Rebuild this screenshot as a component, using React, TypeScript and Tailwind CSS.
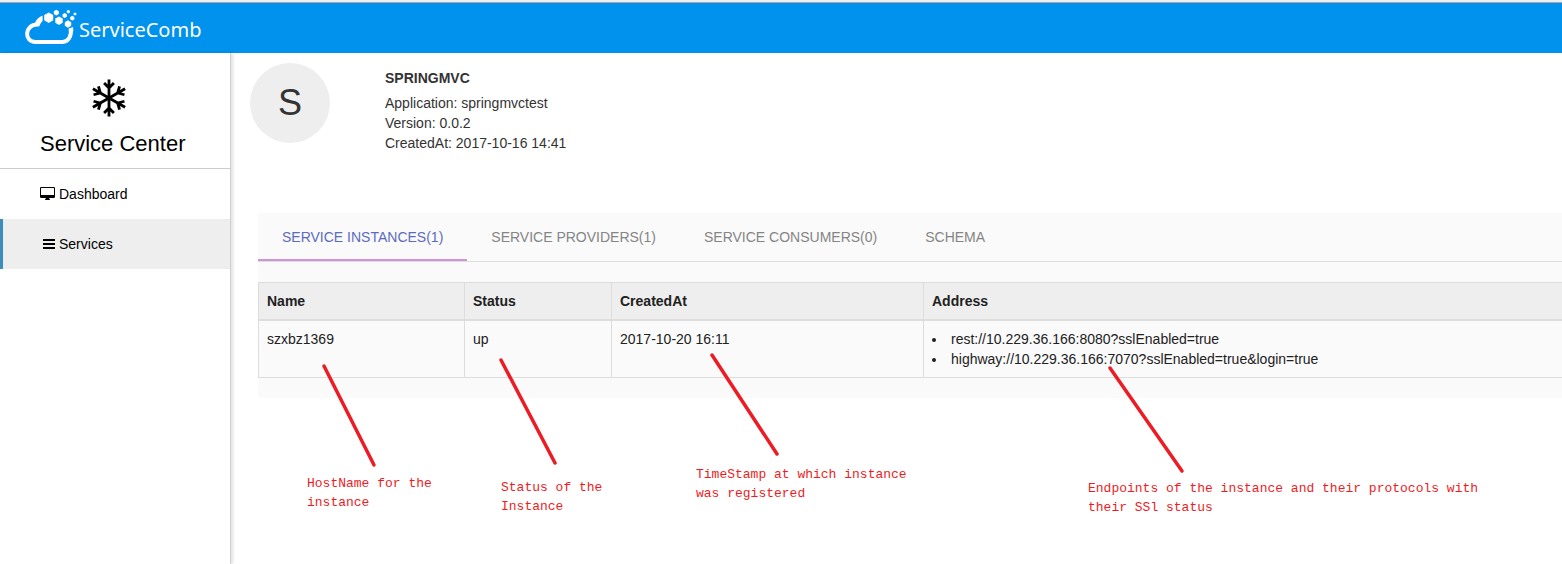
import React from "react";

const hexagons = [
  { x: 48.7, y: 17.7, r: 5.2 },
  { x: 59, y: 20.7, r: 4.3 },
  { x: 68, y: 24, r: 3.7 },
  { x: 56.3, y: 12.6, r: 2.9 },
  { x: 64.7, y: 15.5, r: 2.5 },
  { x: 72.3, y: 18.2, r: 2.4 },
  { x: 68.3, y: 11.7, r: 1.8 },
  { x: 75, y: 14, r: 1.6 },
];

function hexPoints(x: number, y: number, r: number) {
  return [30, 90, 150, 210, 270, 330]
    .map((a) => {
      const t = (a * Math.PI) / 180;
      return `${(x + r * Math.cos(t)).toFixed(2)},${(y + r * Math.sin(t)).toFixed(2)}`;
    })
    .join(" ");
}

function CloudLogo() {
  return (
    <svg viewBox="24 9 54 38" className="h-[38px] w-[54px] shrink-0" aria-hidden="true">
      <path
        d="M71 28.5C71.6 36 68.5 41.9 62.5 41.9H35.5C23.8 41.9 24.2 24.6 37.5 24.6"
        fill="none"
        stroke="white"
        strokeWidth="4"
      />
      <path d="M34.5 24.5C35.5 20.5 38.5 17 42.6 15.8V21C41 22.5 40 24.3 39.2 26.6L35 26Z" fill="white" />
      <path d="M68.5 29L73 26.8L73.4 31L69 32Z" fill="white" />
      {hexagons.map((h) => (
        <polygon key={`${h.x}-${h.y}`} points={hexPoints(h.x, h.y, h.r)} fill="white" />
      ))}
    </svg>
  );
}

function Snowflake() {
  return (
    <svg viewBox="-20 -20 40 40" className="size-10" aria-hidden="true">
      {[0, 60, 120, 180, 240, 300].map((a) => (
        <path
          key={a}
          transform={`rotate(${a})`}
          d="M0 0V-18.6M-4.9 -15L0 -10L4.9 -15"
          fill="none"
          stroke="black"
          strokeWidth="2.8"
          strokeLinecap="butt"
          strokeLinejoin="round"
        />
      ))}
    </svg>
  );
}

function DesktopIcon() {
  return (
    <svg viewBox="0 0 15 14" className="h-3.5 w-[15px]" aria-hidden="true">
      <path
        fillRule="evenodd"
        fill="black"
        d="M1.2 0H13.8Q15 0 15 1.2V9.8Q15 11 13.8 11H9.3V12Q10 12.2 10 12.8V13H5V12.8Q5 12.2 5.7 12V11H1.2Q0 11 0 9.8V1.2Q0 0 1.2 0ZM1.4 1Q1 1 1 1.4V8H14V1.4Q14 1 13.6 1Z"
      />
    </svg>
  );
}

function BarsIcon() {
  return (
    <svg viewBox="0 0 12 14" className="h-3.5 w-3" aria-hidden="true">
      <path fill="black" d="M0 2h12v2H0zM0 6h12v2H0zM0 10h12v2H0z" />
    </svg>
  );
}

const navItems = [
  { label: "Dashboard", icon: <DesktopIcon />, active: false },
  { label: "Services", icon: <BarsIcon />, active: true },
];

const tabs = ["Service Instances(1)", "Service Providers(1)", "Service Consumers(0)", "Schema"];

const pointers = [
  [324, 366, 374, 465],
  [501, 360, 555, 463],
  [712, 355, 777, 454],
  [1110, 368, 1182, 471],
];

function Annotations() {
  const note = "absolute whitespace-nowrap font-['Liberation_Mono',monospace] text-[13px] leading-[19px] text-[#ed1c24]";
  return (
    <div className="pointer-events-none absolute inset-0 overflow-hidden">
      <svg className="absolute inset-0 size-full" aria-hidden="true">
        {pointers.map(([x1, y1, x2, y2]) => (
          <line key={x1} x1={x1} y1={y1} x2={x2} y2={y2} stroke="#ed1c24" strokeWidth="3.5" strokeLinecap="round" />
        ))}
      </svg>
      <p className={`${note} left-[307px] top-[474px]`}>
        HostName for the
        <br />
        instance
      </p>
      <p className={`${note} left-[501px] top-[478px]`}>
        Status of the
        <br />
        Instance
      </p>
      <p className={`${note} left-[696px] top-[465px]`}>
        TimeStamp at which instance
        <br />
        was registered
      </p>
      <p className={`${note} left-[1088px] top-[479px]`}>
        Endpoints of the instance and their protocols with
        <br />
        their SSl status
      </p>
    </div>
  );
}

export default function App() {
  const head = "border-l border-[#ddd] px-2 py-2 text-left font-bold";
  const cell = "border-l border-[#ddd] px-2 py-2 align-top";
  return (
    <div className="relative flex min-h-screen flex-col bg-white font-['Liberation_Sans',Arial,sans-serif] text-sm text-[#333]">
      <header className="border-t-2 border-[#f0f0f0]">
        <div className="flex h-[51px] items-center border-t border-[#a8a8a8] bg-[#0092ec] px-6">
          <a href="#" className="flex items-center gap-px text-white">
            <CloudLogo />
            <span className="pt-1 font-['Noto_Sans',sans-serif] text-xl leading-none">ServiceComb</span>
          </a>
        </div>
      </header>

      <div className="flex flex-1">
        <aside className="w-[231px] shrink-0 border-r border-[#d0d0d0] text-black shadow-[2px_0_3px_rgba(0,0,0,0.12)]">
          <div className="border-b border-[#ccc] pt-[25px] pb-2 pl-10">
            <div className="flex w-[137px] justify-center">
              <Snowflake />
            </div>
            <h1 className="mt-2.5 text-[22px] leading-8">Service Center</h1>
          </div>
          <nav>
            {navItems.map((item) => (
              <a
                key={item.label}
                href="#"
                className={`flex h-[50px] items-center border-l-3 pl-[37px] ${
                  item.active ? "border-[#3c8dbc] bg-[#eee]" : "border-transparent"
                }`}
              >
                <span className="mr-1 flex w-[15px] justify-end">{item.icon}</span>
                {item.label}
              </a>
            ))}
          </nav>
        </aside>

        <main className="min-w-0 flex-1 pt-2.5 pl-[19px]">
          <section className="flex gap-[55px]">
            <div className="flex size-20 shrink-0 items-center justify-center rounded-full bg-[#eee] text-4xl">S</div>
            <div className="pt-[5px] leading-5">
              <h2 className="mb-[5px] font-bold">SPRINGMVC</h2>
              <p>Application: springmvctest</p>
              <p>Version: 0.0.2</p>
              <p>CreatedAt: 2017-10-16 14:41</p>
            </div>
          </section>

          <section className="mt-[60px] ml-2 bg-[#fafafa] pb-5">
            <div role="tablist" className="flex border-b border-[#ddd]">
              {tabs.map((tab, i) => (
                <button
                  key={tab}
                  type="button"
                  role="tab"
                  aria-selected={i === 0}
                  className={`h-[48px] border-b-2 px-6 pt-0.5 uppercase ${
                    i === 0 ? "border-[#ce93d8] text-[#5c6bc0]" : "border-transparent text-[#858585]"
                  }`}
                >
                  {tab}
                </button>
              ))}
            </div>
            <table className="mt-5 w-full table-fixed border-collapse border-y border-l border-[#ddd] leading-5 text-[#212121]">
              <colgroup>
                <col className="w-[206px]" />
                <col className="w-[147px]" />
                <col className="w-[312px]" />
                <col />
              </colgroup>
              <thead>
                <tr className="border-b-2 border-[#ddd] bg-[#eee]">
                  <th className={head}>Name</th>
                  <th className={head}>Status</th>
                  <th className={head}>CreatedAt</th>
                  <th className={head}>Address</th>
                </tr>
              </thead>
              <tbody>
                <tr>
                  <td className={cell}>szxbz1369</td>
                  <td className={cell}>up</td>
                  <td className={cell}>2017-10-20 16:11</td>
                  <td className={cell}>
                    <ul className="list-inside list-disc">
                      <li>rest://10.229.36.166:8080?sslEnabled=true</li>
                      <li>highway://10.229.36.166:7070?sslEnabled=true&amp;login=true</li>
                    </ul>
                  </td>
                </tr>
              </tbody>
            </table>
          </section>
        </main>
      </div>

      <Annotations />
    </div>
  );
}
